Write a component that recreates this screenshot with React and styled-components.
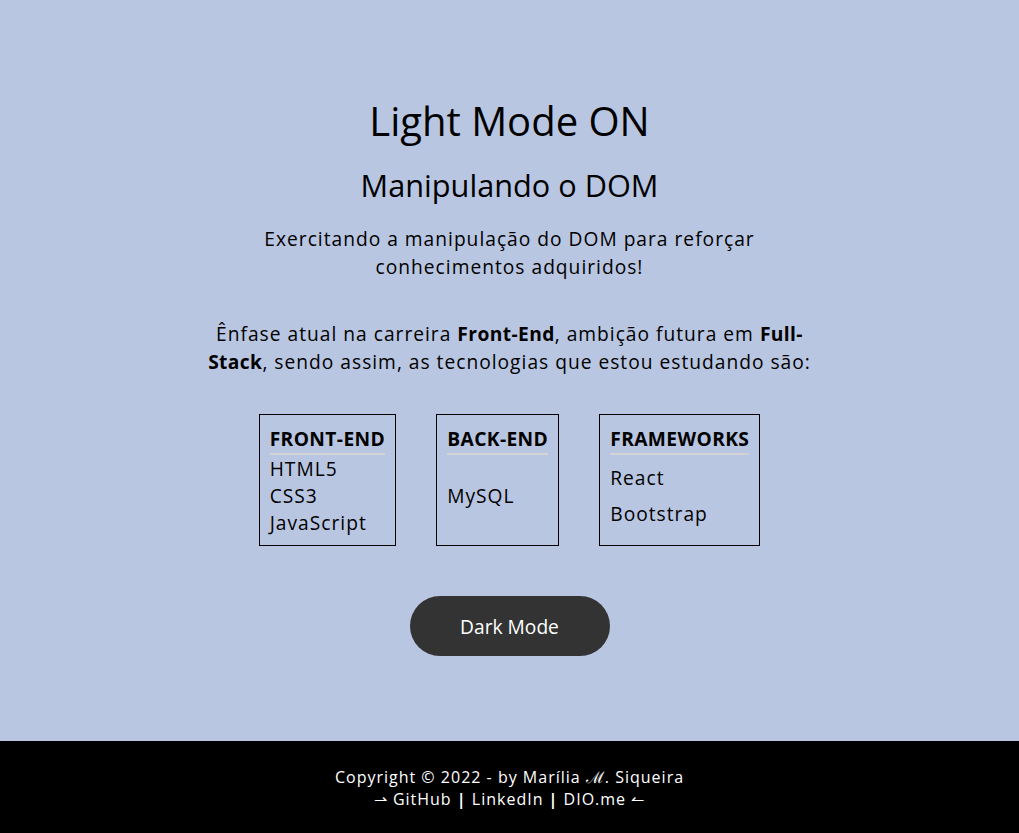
import React from 'react';
import styled, { createGlobalStyle } from 'styled-components';

const GlobalStyle = createGlobalStyle`
  * {
    box-sizing: border-box;
  }

  html, body {
    margin: 0;
    padding: 0;
  }

  body {
    font-family: "Open Sans", "Liberation Sans", sans-serif;
    background: #b9c6e1;
    color: #000;
  }
`;

const stacks = [
  { title: 'FRONT-END', items: ['HTML5', 'CSS3', 'JavaScript'] },
  { title: 'BACK-END', items: ['MySQL'] },
  { title: 'FRAMEWORKS', items: ['React', 'Bootstrap'] },
];

const Page = styled.div`
  min-height: 100vh;
  display: flex;
  flex-direction: column;
`;

const Main = styled.main`
  flex: 1;
  display: flex;
  flex-direction: column;
  align-items: center;
  padding-top: 97px;
  text-align: center;
`;

const Title = styled.h1`
  margin: 0;
  font-size: 40px;
  line-height: 48px;
  font-weight: 400;
`;

const Subtitle = styled.h2`
  margin: 22px 0 0;
  font-size: 30.7px;
  line-height: 37px;
  font-weight: 400;
`;

const Text = styled.p`
  width: 610px;
  margin: ${({ $top }) => $top}px 0 0;
  font-size: 19.2px;
  line-height: 28px;
  letter-spacing: 1px;

  strong {
    font-weight: 700;
    letter-spacing: 0.4px;
  }
`;

const Stacks = styled.div`
  display: flex;
  gap: 40px;
  margin-top: 38px;
`;

const Card = styled.div`
  display: flex;
  flex-direction: column;
  border: 1px solid #000;
  padding: 10px 10px 9px;
  height: 132px;
  text-align: left;
`;

const CardTitle = styled.h3`
  margin: 0;
  font-size: 19.2px;
  line-height: 28px;
  font-weight: 700;
  letter-spacing: 0.4px;
  border-bottom: 2px solid #d3d3d3;
`;

const List = styled.ul`
  flex: 1;
  list-style: none;
  margin: 0;
  padding: 0;
  display: flex;
  flex-direction: column;
  justify-content: space-evenly;
`;

const Item = styled.li`
  font-size: 19.2px;
  line-height: 27px;
  letter-spacing: 1px;
`;

const Toggle = styled.button`
  margin-top: 50px;
  width: 200px;
  height: 60px;
  border: none;
  border-radius: 30px;
  background: #333;
  color: #fff;
  font-family: inherit;
  font-size: 19.2px;
  cursor: pointer;
`;

const Footer = styled.footer`
  background: #000;
  color: #fff;
  padding: 25px 0 23px;
  text-align: center;
  font-size: 16px;
  line-height: 22px;
  letter-spacing: 1px;

  a {
    color: #fff;
    text-decoration: none;
  }

  b {
    font-weight: 700;
  }
`;

export default function App() {
  return (
    <Page>
      <GlobalStyle />
      <Main>
        <Title>Light Mode ON</Title>
        <Subtitle>Manipulando o DOM</Subtitle>
        <Text $top={21}>
          Exercitando a manipulação do DOM para reforçar conhecimentos adquiridos!
        </Text>
        <Text $top={39}>
          Ênfase atual na carreira <strong>Front-End</strong>, ambição futura em{' '}
          <strong>Full-Stack</strong>, sendo assim, as tecnologias que estou estudando são:
        </Text>
        <Stacks>
          {stacks.map(({ title, items }) => (
            <Card key={title}>
              <CardTitle>{title}</CardTitle>
              <List>
                {items.map((item) => <Item key={item}>{item}</Item>)}
              </List>
            </Card>
          ))}
        </Stacks>
        <Toggle type="button">Dark Mode</Toggle>
      </Main>
      <Footer>
        <div>Copyright © 2022 - by Marília ℳ. Siqueira</div>
        <div>
          ⇀ <a href="#github">GitHub</a> <b>|</b> <a href="#linkedin">LinkedIn</a>{' '}
          <b>|</b> <a href="#dio">DIO.me</a> ↼
        </div>
      </Footer>
    </Page>
  );
}
